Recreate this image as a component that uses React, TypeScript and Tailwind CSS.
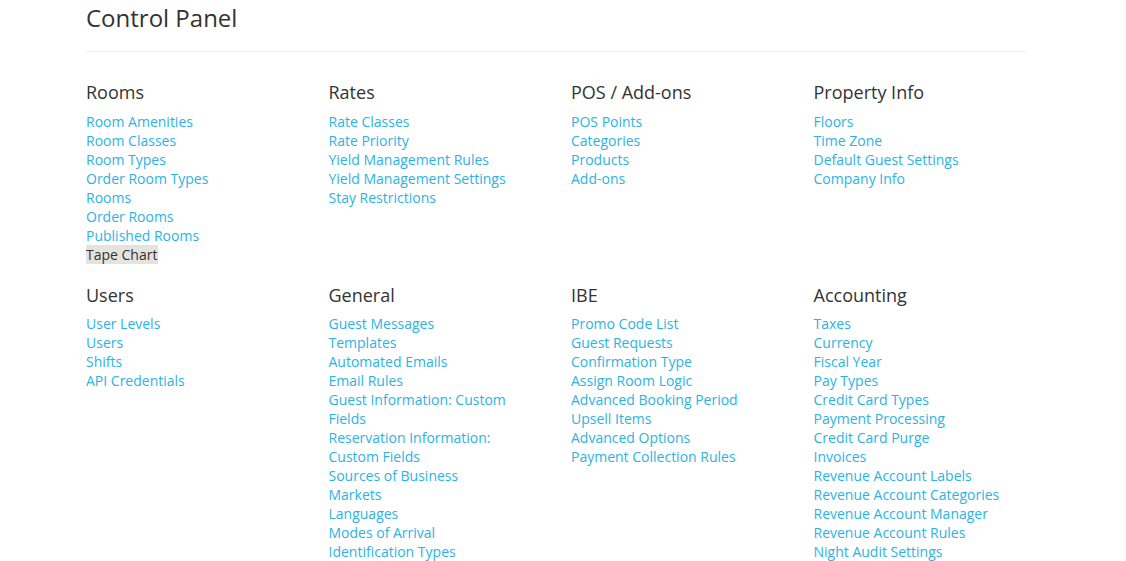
import React from 'react';

type Section = { title: string; links: string[]; active?: string };

const rows: Section[][] = [
  [
    {
      title: 'Rooms',
      links: ['Room Amenities', 'Room Classes', 'Room Types', 'Order Room Types', 'Rooms', 'Order Rooms', 'Published Rooms', 'Tape Chart'],
      active: 'Tape Chart',
    },
    { title: 'Rates', links: ['Rate Classes', 'Rate Priority', 'Yield Management Rules', 'Yield Management Settings', 'Stay Restrictions'] },
    { title: 'POS / Add-ons', links: ['POS Points', 'Categories', 'Products', 'Add-ons'] },
    { title: 'Property Info', links: ['Floors', 'Time Zone', 'Default Guest Settings', 'Company Info'] },
  ],
  [
    { title: 'Users', links: ['User Levels', 'Users', 'Shifts', 'API Credentials'] },
    {
      title: 'General',
      links: [
        'Guest Messages',
        'Templates',
        'Automated Emails',
        'Email Rules',
        'Guest Information: Custom Fields',
        'Reservation Information: Custom Fields',
        'Sources of Business',
        'Markets',
        'Languages',
        'Modes of Arrival',
        'Identification Types',
      ],
    },
    {
      title: 'IBE',
      links: [
        'Promo Code List',
        'Guest Requests',
        'Confirmation Type',
        'Assign Room Logic',
        'Advanced Booking Period',
        'Upsell Items',
        'Advanced Options',
        'Payment Collection Rules',
      ],
    },
    {
      title: 'Accounting',
      links: [
        'Taxes',
        'Currency',
        'Fiscal Year',
        'Pay Types',
        'Credit Card Types',
        'Payment Processing',
        'Credit Card Purge',
        'Invoices',
        'Revenue Account Labels',
        'Revenue Account Categories',
        'Revenue Account Manager',
        'Revenue Account Rules',
        'Night Audit Settings',
      ],
    },
  ],
];

const SectionBlock: React.FC<{ section: Section }> = ({ section }) => (
  <div className="pr-[30px]">
    <h4 className="text-[18px] leading-[20px] text-[#333] mb-[9.5px]">{section.title}</h4>
    <ul>
      {section.links.map((link) => (
        <li key={link} className="text-[14px] leading-[19px]">
          {link === section.active ? (
            <span className="bg-[#e5e3df] text-[#333] pr-[1px]">{link}</span>
          ) : (
            <a href="#" className="text-[#2cb3e3]">
              {link}
            </a>
          )}
        </li>
      ))}
    </ul>
  </div>
);

export default function App() {
  return (
    <div className="min-h-screen bg-white font-['Open_Sans',sans-serif]">
      <div className="ml-[86px] w-[940px]">
        <h3 className="pt-[5px] text-[24px] leading-[26px] text-[#333]">Control Panel</h3>
        <hr className="mt-[20px] border-0 border-t border-[#eeeeee]" />
        <div className="w-[970px] pt-[30px]">
          {rows.map((row, i) => (
            <div key={i} className={`grid grid-cols-4 ${i === 0 ? 'mb-[21px]' : ''}`}>
              {row.map((s) => (
                <SectionBlock key={s.title} section={s} />
              ))}
            </div>
          ))}
        </div>
      </div>
    </div>
  );
}
